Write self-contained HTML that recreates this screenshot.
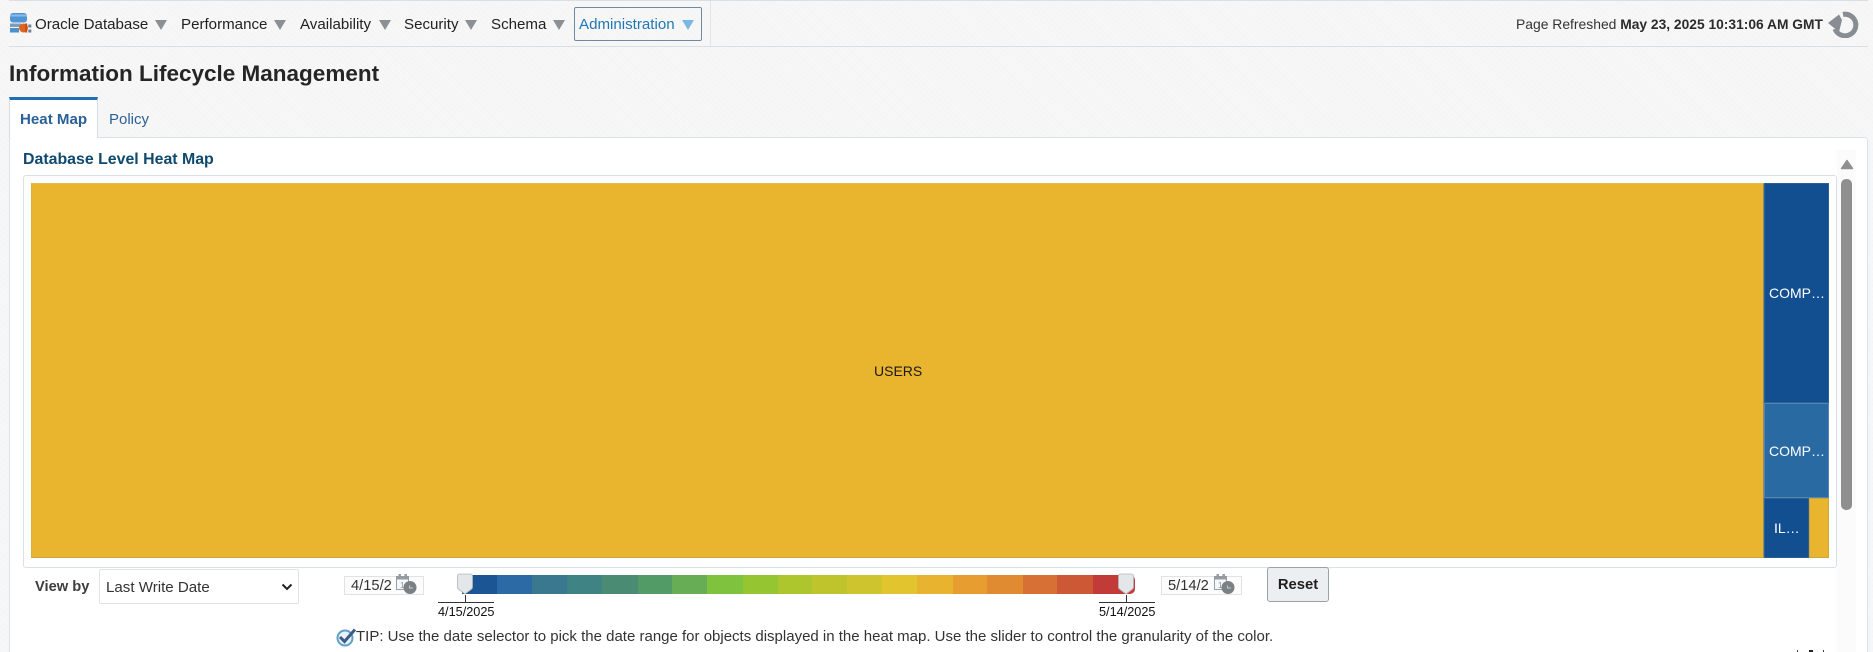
<!DOCTYPE html>
<html>
<head>
<meta charset="utf-8">
<title>Information Lifecycle Management</title>
<style>
*{box-sizing:border-box}
html,body{margin:0;padding:0;width:1873px;height:652px;overflow:hidden}
body{position:relative;font-family:"Liberation Sans",Arial,sans-serif;color:#2b2b2b;
background:#f6f6f6;background-image:repeating-linear-gradient(45deg,#f7f7f7 0,#f7f7f7 2px,#f5f5f5 2px,#f5f5f5 4px)}
.a{position:absolute;white-space:nowrap}
.nav{font-size:15.1px;line-height:18px;top:15px;color:#222}
.tri{position:absolute;top:20px;width:0;height:0;border-left:6px solid transparent;border-right:6px solid transparent;border-top:10px solid #8c9094}
.seg{position:absolute;top:575px;height:19px}
.tile{position:absolute;color:#fff;font-size:14px;line-height:16px;white-space:nowrap}
.date{position:absolute;top:576px;height:19px;background:#fcfcfc;border:1px solid #dfe3e6;font-size:14.7px;line-height:18px;color:#333;padding-left:6px}
</style>
</head>
<body>
<!-- top lines -->
<div class="a" style="left:9px;top:0;width:1859px;height:1px;background:#d9dfe4"></div>
<div class="a" style="left:9px;top:46px;width:1859px;height:1px;background:#d9dfe4"></div>
<div class="a" style="left:710px;top:1px;width:1px;height:45px;background:#e2e5e8"></div>

<!-- db icon -->
<svg class="a" style="left:9px;top:12px" width="23" height="21" viewBox="0 0 23 21">
<rect x="1" y="1" width="17" height="9.5" rx="3" fill="#4f94d4"/>
<rect x="1" y="2.5" width="17" height="2" fill="#8cbbe3"/>
<rect x="1" y="11.5" width="11" height="3.5" fill="#7c9cb8"/>
<rect x="1" y="16" width="9" height="4.5" fill="#4f8fca"/>
<circle cx="14.5" cy="16" r="4.5" fill="#e0641f"/>
<rect x="16" y="11.5" width="2.2" height="9" fill="#c94f18"/>
<rect x="19.3" y="12.5" width="3" height="3" fill="#6d8297"/>
<rect x="19.3" y="17.5" width="3" height="3" fill="#6d8297"/>
</svg>

<div class="a nav" style="left:35px;top:16px">Oracle Database</div><div class="tri" style="left:155px"></div>
<div class="a nav" style="left:181px;top:16px">Performance</div><div class="tri" style="left:274px"></div>
<div class="a nav" style="left:300px;top:16px">Availability</div><div class="tri" style="left:379px"></div>
<div class="a nav" style="left:404px;top:16px">Security</div><div class="tri" style="left:465px"></div>
<div class="a nav" style="left:491px;top:16px">Schema</div><div class="tri" style="left:553px"></div>
<div class="a" style="left:574px;top:7px;width:128px;height:34px;border:1px solid #6d8aa3;border-radius:2px"></div>
<div class="a nav" style="left:579px;top:16px;color:#1f78b4">Administration</div><div class="tri" style="left:682px;border-top-color:#7db8e4"></div>

<div class="a" style="left:1516px;top:15px;font-size:13.9px;line-height:18px;color:#333">Page Refreshed <b style="color:#2b2b2b;font-size:13.8px">May 23, 2025 10:31:06 AM GMT</b></div>
<svg class="a" style="left:1828px;top:11px" width="32" height="27" viewBox="0 0 32 27">
<path d="M15 3.4A10.8 10.8 0 1 1 7 18" fill="none" stroke="#878d92" stroke-width="5"/>
<path d="M0 12 L11 3.5 L14 9 L11 21 Z" fill="#878d92"/>
</svg>

<!-- title -->
<div class="a" style="left:9px;top:60px;font-size:22.5px;line-height:28px;font-weight:bold;color:#252525">Information Lifecycle Management</div>

<!-- panel -->
<div class="a" style="left:9px;top:137px;width:1859px;height:520px;background:#fff;border:1px solid #dde2e6;border-radius:3px"></div>

<!-- tabs -->
<div class="a" style="left:9px;top:97px;width:89px;height:41px;background:#fff;border-top:3px solid #1f6fb2;border-left:1px solid #d5dce2;border-right:1px solid #d5dce2"></div>
<div class="a" style="left:20px;top:111px;font-size:15.1px;line-height:18px;font-weight:bold;color:#2a6198">Heat Map</div>
<div class="a" style="left:109px;top:111px;font-size:15px;line-height:18px;color:#2a6198">Policy</div>

<div class="a" style="left:23px;top:151px;font-size:15.9px;line-height:18px;font-weight:bold;color:#0f4a6e">Database Level Heat Map</div>

<!-- scrollbar -->
<div class="a" style="left:1837px;top:150px;width:19px;height:506px;background:#fbfbfb"></div>
<svg class="a" style="left:1840px;top:159px" width="14" height="11" viewBox="0 0 14 11"><path d="M7 1.5 L12.5 9.5 H1.5 Z" fill="#8f8f8f" stroke="#8f8f8f" stroke-width="1.5" stroke-linejoin="round"/></svg>
<div class="a" style="left:1841px;top:179px;width:11px;height:331px;background:#8f8f8f;border-radius:5px"></div>

<!-- treemap box -->
<div class="a" style="left:23px;top:175px;width:1814px;height:393px;background:#fff;border:1px solid #dbe0e4;border-radius:3px"></div>
<div class="a" style="left:31px;top:183px;width:1733px;height:375px;background:#e9b42e;border:1px solid #c9a63f;border-top-color:#e4bb52;border-left-color:#dcb13a;border-right-color:#8c8a6a"></div>
<div class="a" style="left:874px;top:363px;font-size:14px;line-height:16px;color:#1a1a1a">USERS</div>
<div class="tile" style="left:1764px;top:183px;width:65px;height:220px;background:#124f91;border:1px solid #2a6198"><span style="position:absolute;left:4px;top:101px">COMP…</span></div>
<div class="tile" style="left:1764px;top:403px;width:65px;height:95px;background:#2a6aa3;border:1px solid #5586af"><span style="position:absolute;left:4px;top:39px">COMP…</span></div>
<div class="tile" style="left:1764px;top:498px;width:45px;height:60px;background:#124f91;border:1px solid #2d5f94"><span style="position:absolute;left:9px;top:21px">IL…</span></div>
<div class="a" style="left:1809px;top:498px;width:20px;height:60px;background:#e9b42e;border:1px solid #c9a63f"></div>

<!-- controls -->
<div class="a" style="left:35px;top:578px;font-size:14.7px;line-height:19px;font-weight:bold;color:#3d3d3d">View by</div>
<div class="a" style="left:99px;top:569px;width:200px;height:35px;background:#fff;border:1px solid #e0e4e7;border-radius:2px"></div>
<div class="a" style="left:106px;top:578px;font-size:15.1px;line-height:19px;color:#333">Last Write Date</div>
<svg class="a" style="left:281px;top:583px" width="12" height="8" viewBox="0 0 12 8"><path d="M1.5 1.5 L6 6 L10.5 1.5" fill="none" stroke="#222" stroke-width="2"/></svg>

<div class="date" style="left:344px;width:80px">4/15/2</div>
<div class="date" style="left:1161px;width:81px">5/14/2</div>
<svg class="a" style="left:395px;top:573px" width="23" height="23" viewBox="0 0 23 23">
<rect x="1.5" y="3.5" width="12" height="13" fill="#f4f8fb" stroke="#9aa0a5"/><rect x="1" y="3" width="13" height="3.5" fill="#959ba0"/>
<rect x="3.5" y="1" width="2.4" height="4" fill="#959ba0"/><rect x="9.5" y="1" width="2.4" height="4" fill="#959ba0"/>
<text x="5" y="15" font-size="8" font-family="Liberation Sans" fill="#8a9096">1</text>
<circle cx="15" cy="14.5" r="6.5" fill="#7b8085"/><path d="M14.5 12.5v2.5h3.5" fill="none" stroke="#c9ccce"/>
</svg>
<svg class="a" style="left:1213px;top:573px" width="23" height="23" viewBox="0 0 23 23">
<rect x="1.5" y="3.5" width="12" height="13" fill="#f4f8fb" stroke="#9aa0a5"/><rect x="1" y="3" width="13" height="3.5" fill="#959ba0"/>
<rect x="3.5" y="1" width="2.4" height="4" fill="#959ba0"/><rect x="9.5" y="1" width="2.4" height="4" fill="#959ba0"/>
<text x="5" y="15" font-size="8" font-family="Liberation Sans" fill="#8a9096">1</text>
<circle cx="15" cy="14.5" r="6.5" fill="#7b8085"/><path d="M14.5 12.5v2.5h3.5" fill="none" stroke="#c9ccce"/>
</svg>

<!-- slider -->
<div class="seg" style="left:462px;width:35px;background:#1b5593"></div>
<div class="seg" style="left:497px;width:35px;background:#2b6aa5"></div>
<div class="seg" style="left:532px;width:35px;background:#3a7890"></div>
<div class="seg" style="left:567px;width:35px;background:#3f8384"></div>
<div class="seg" style="left:602px;width:36px;background:#4a8b74"></div>
<div class="seg" style="left:638px;width:34px;background:#529a66"></div>
<div class="seg" style="left:672px;width:35px;background:#66ad55"></div>
<div class="seg" style="left:707px;width:36px;background:#7ec23d"></div>
<div class="seg" style="left:743px;width:35px;background:#95c531"></div>
<div class="seg" style="left:778px;width:34px;background:#aec62e"></div>
<div class="seg" style="left:812px;width:35px;background:#c0c42c"></div>
<div class="seg" style="left:847px;width:35px;background:#cec42d"></div>
<div class="seg" style="left:882px;width:35px;background:#e2c42f"></div>
<div class="seg" style="left:917px;width:36px;background:#e8b32e"></div>
<div class="seg" style="left:953px;width:34px;background:#e79d2f"></div>
<div class="seg" style="left:987px;width:36px;background:#e08a31"></div>
<div class="seg" style="left:1023px;width:34px;background:#d77034"></div>
<div class="seg" style="left:1057px;width:36px;background:#cc5836"></div>
<div class="seg" style="left:1093px;width:42px;background:#c23b38;border-radius:0 5px 5px 0"></div>

<svg class="a" style="left:456px;top:573px" width="18" height="22" viewBox="0 0 18 22"><path d="M1.5 3a2 2 0 0 1 2-2h11a2 2 0 0 1 2 2v11q0 1.5-1.5 2.5l-6 4.5-6-4.5q-1.5-1-1.5-2.5z" fill="#e4e7e9" stroke="#b3b7ba" stroke-width=".8"/></svg>
<svg class="a" style="left:1117px;top:573px" width="18" height="22" viewBox="0 0 18 22"><path d="M1.5 3a2 2 0 0 1 2-2h11a2 2 0 0 1 2 2v11q0 1.5-1.5 2.5l-6 4.5-6-4.5q-1.5-1-1.5-2.5z" fill="#e4e7e9" stroke="#b3b7ba" stroke-width=".8"/></svg>

<div class="a" style="left:465px;top:595px;width:1px;height:7px;background:#333"></div>
<div class="a" style="left:438px;top:602px;width:56px;height:1px;background:#333"></div>
<div class="a" style="left:438px;top:605px;font-size:12.7px;line-height:15px;color:#111">4/15/2025</div>
<div class="a" style="left:1126px;top:595px;width:1px;height:7px;background:#333"></div>
<div class="a" style="left:1099px;top:602px;width:56px;height:1px;background:#333"></div>
<div class="a" style="left:1099px;top:605px;font-size:12.7px;line-height:15px;color:#111">5/14/2025</div>

<div class="a" style="left:1267px;top:567px;width:62px;height:35px;background:#eceff1;border:1px solid #9aa2a8;border-radius:3px;text-align:center;font-size:14.8px;line-height:34px;font-weight:bold;color:#1f1f1f">Reset</div>

<!-- tip -->
<svg class="a" style="left:335px;top:627px" width="22" height="20" viewBox="0 0 22 20">
<circle cx="10" cy="11" r="7.5" fill="#eaf3fa" stroke="#5e9fcb" stroke-width="2"/>
<path d="M5 10 L9.5 14.5 L20 2.5" fill="none" stroke="#3c5c86" stroke-width="3"/>
</svg>
<div class="a" style="left:356px;top:628px;font-size:15px;line-height:18px;color:#333">TIP: Use the date selector to pick the date range for objects displayed in the heat map. Use the slider to control the granularity of the color.</div>

<!-- clipped bottom tick -->
<div class="a" style="left:1797px;top:650px;width:1px;height:2px;background:#444"></div>
<div class="a" style="left:1809px;top:650px;width:4px;height:2px;background:#222"></div>
<div class="a" style="left:1823px;top:650px;width:1px;height:2px;background:#444"></div>
</body>
</html>
